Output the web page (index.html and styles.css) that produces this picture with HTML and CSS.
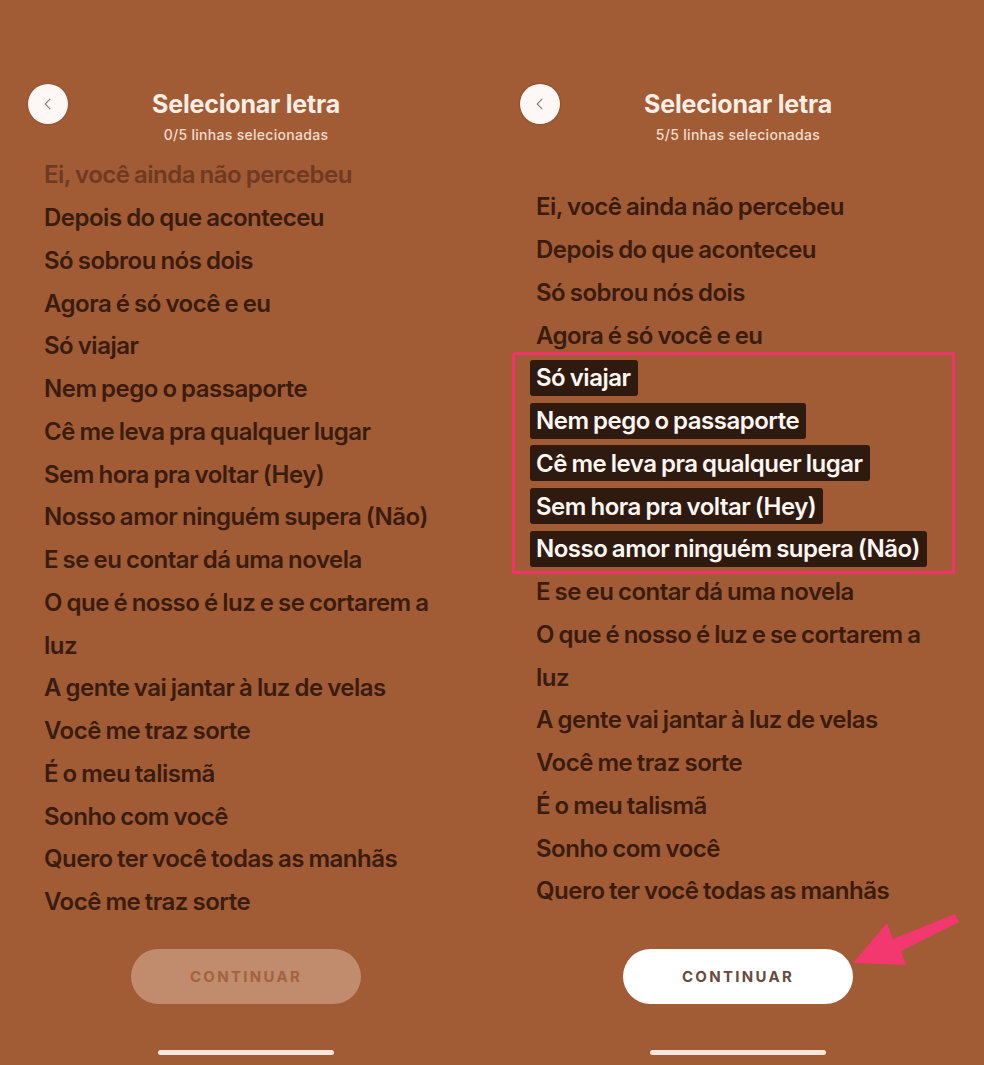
FILE: index.html
```html
<!DOCTYPE html>
<html lang="pt">
<head>
<meta charset="utf-8">
<title>Selecionar letra</title>
<link rel="stylesheet" href="styles.css">
</head>
<body>
<div class="screens">
  <section class="panel panel-left">
    <header class="header">
      <button class="back" aria-label="Voltar">
        <svg viewBox="0 0 20 20" width="16" height="16"><path d="M12.5 4 L6.5 10 L12.5 16" fill="none" stroke="#8a7f7a" stroke-width="1.4" stroke-linecap="round" stroke-linejoin="round"/></svg>
      </button>
      <h1 class="title">Selecionar letra</h1>
      <p class="subtitle">0/5 linhas selecionadas</p>
    </header>
    <ul class="lyrics lyrics-left">
      <li class="line faded"><span>Ei, você ainda não percebeu</span></li>
      <li class="line"><span>Depois do que aconteceu</span></li>
      <li class="line"><span>Só sobrou nós dois</span></li>
      <li class="line"><span>Agora é só você e eu</span></li>
      <li class="line"><span>Só viajar</span></li>
      <li class="line"><span>Nem pego o passaporte</span></li>
      <li class="line"><span>Cê me leva pra qualquer lugar</span></li>
      <li class="line"><span>Sem hora pra voltar (Hey)</span></li>
      <li class="line"><span>Nosso amor ninguém supera (Não)</span></li>
      <li class="line"><span>E se eu contar dá uma novela</span></li>
      <li class="line"><span>O que é nosso é luz e se cortarem a</span></li>
      <li class="line"><span>luz</span></li>
      <li class="line"><span>A gente vai jantar à luz de velas</span></li>
      <li class="line"><span>Você me traz sorte</span></li>
      <li class="line"><span>É o meu talismã</span></li>
      <li class="line"><span>Sonho com você</span></li>
      <li class="line"><span>Quero ter você todas as manhãs</span></li>
      <li class="line"><span>Você me traz sorte</span></li>
    </ul>
    <div class="footer footer-left">
      <button class="continue disabled">CONTINUAR</button>
    </div>
    <div class="home-bar"></div>
  </section>

  <section class="panel panel-right">
    <header class="header">
      <button class="back" aria-label="Voltar">
        <svg viewBox="0 0 20 20" width="16" height="16"><path d="M12.5 4 L6.5 10 L12.5 16" fill="none" stroke="#8a7f7a" stroke-width="1.4" stroke-linecap="round" stroke-linejoin="round"/></svg>
      </button>
      <h1 class="title">Selecionar letra</h1>
      <p class="subtitle">5/5 linhas selecionadas</p>
    </header>
    <ul class="lyrics lyrics-right">
      <li class="line"><span>Ei, você ainda não percebeu</span></li>
      <li class="line"><span>Depois do que aconteceu</span></li>
      <li class="line"><span>Só sobrou nós dois</span></li>
      <li class="line"><span>Agora é só você e eu</span></li>
      <li class="line selected"><span>Só viajar</span></li>
      <li class="line selected"><span>Nem pego o passaporte</span></li>
      <li class="line selected"><span>Cê me leva pra qualquer lugar</span></li>
      <li class="line selected"><span>Sem hora pra voltar (Hey)</span></li>
      <li class="line selected"><span>Nosso amor ninguém supera (Não)</span></li>
      <li class="line"><span>E se eu contar dá uma novela</span></li>
      <li class="line"><span>O que é nosso é luz e se cortarem a</span></li>
      <li class="line"><span>luz</span></li>
      <li class="line"><span>A gente vai jantar à luz de velas</span></li>
      <li class="line"><span>Você me traz sorte</span></li>
      <li class="line"><span>É o meu talismã</span></li>
      <li class="line"><span>Sonho com você</span></li>
      <li class="line"><span>Quero ter você todas as manhãs</span></li>
    </ul>
    <div class="footer footer-right">
      <button class="continue">CONTINUAR</button>
    </div>
    <div class="home-bar"></div>

    <div class="highlight-frame"></div>
    <svg class="arrow" viewBox="0 0 120 60" width="120" height="60">
      <polygon points="0,52 34,12 40,28 102,3 106,11 48,40 53,54" fill="#f2386f"/>
    </svg>
  </section>
</div>
</body>
</html>
```

FILE: styles.css
```css
* { box-sizing: border-box; }

html, body {
  margin: 0;
  padding: 0;
  background: #a15b35;
}

body {
  width: 984px;
  height: 1065px;
  overflow: hidden;
  font-family: Inter, "Noto Sans", "Liberation Sans", sans-serif;
}

.screens {
  display: flex;
  width: 984px;
  height: 1065px;
}

.panel {
  position: relative;
  width: 492px;
  height: 1065px;
  display: flex;
  flex-direction: column;
  background: #a15b35;
}

.header {
  position: relative;
  padding-top: 89px;
  text-align: center;
}

.back {
  position: absolute;
  left: 28px;
  top: 84px;
  width: 40px;
  height: 40px;
  border-radius: 50%;
  border: none;
  background: #fdf8f5;
  display: flex;
  align-items: center;
  justify-content: center;
  padding: 0;
  box-shadow: 0 0 2px rgba(60, 25, 10, 0.4);
}

.title {
  margin: 0;
  font-size: 25px;
  line-height: 30px;
  font-weight: 700;
  color: #fbeee5;
  letter-spacing: -0.2px;
}

.subtitle {
  margin: 7px 0 0;
  font-size: 14px;
  line-height: 18px;
  font-weight: 500;
  color: #f4dccd;
  letter-spacing: 0.3px;
}

.lyrics {
  list-style: none;
  margin: 0;
  padding: 0 0 0 44px;
}

.lyrics-left { margin-top: 9.5px; }
.lyrics-right { margin-top: 41.5px; }

.line {
  height: 42.75px;
  display: flex;
  align-items: center;
  font-size: 24px;
  font-weight: 600;
  letter-spacing: -0.5px;
  word-spacing: -1px;
  color: #3a1c0e;
  white-space: nowrap;
}

.line.faded { color: #6f3a21; }

.line.selected span {
  display: inline-flex;
  align-items: center;
  height: 36px;
  margin-left: -6px;
  padding: 0 7px 0 6px;
  background: #2f1a10;
  color: #fdf7f3;
  border-radius: 3px;
}

.footer {
  display: flex;
  justify-content: center;
}

.footer-left { margin-top: 26px; }
.footer-right { margin-top: 37px; }

.continue {
  width: 230px;
  height: 55px;
  border: none;
  border-radius: 28px;
  background: #ffffff;
  color: #6a4a3c;
  font-family: Inter, "Noto Sans", "Liberation Sans", sans-serif;
  font-size: 15px;
  font-weight: 700;
  letter-spacing: 2.3px;
  padding: 0;
}

.continue.disabled {
  background: #c18b6e;
  color: #a4623e;
}

.home-bar {
  width: 176px;
  height: 5px;
  border-radius: 3px;
  background: #fbe6dc;
  margin: 46px auto 0;
}

.highlight-frame {
  position: absolute;
  left: 20px;
  top: 352px;
  width: 443px;
  height: 222px;
  border: 3px solid #f0336c;
  border-radius: 2px;
}

.arrow {
  position: absolute;
  left: 361px;
  top: 911px;
}
```
